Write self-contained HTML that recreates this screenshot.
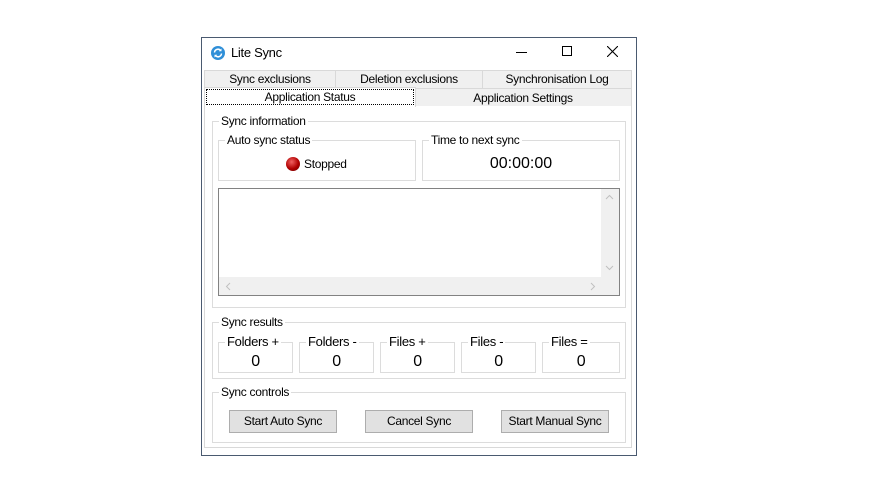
<!DOCTYPE html>
<html><head><style>
body{margin:0;width:890px;height:500px;background:#fff;position:relative;font-family:"Liberation Sans",sans-serif;font-size:12px;letter-spacing:-0.3px;color:#000;overflow:hidden}
.a{position:absolute;box-sizing:border-box}
.tab{position:absolute;box-sizing:border-box;background:#f0f0f0;border:1px solid #d9d9d9;text-align:center;line-height:17px;font-size:12px}
.gb{position:absolute;box-sizing:border-box;border:1px solid #dcdcdc}
.lg{position:absolute;background:#fff;padding:0 2px;top:-8px;left:6px;line-height:14px;white-space:nowrap}
.btn{position:absolute;box-sizing:border-box;background:#e1e1e1;border:1px solid #adadad;text-align:center;line-height:20px;top:410px;height:23px;width:108px}
.num{position:absolute;left:0;right:0;top:10px;text-align:center;font-size:16px}
</style></head><body>
<div class="a" style="left:201px;top:37px;width:436px;height:419px;border:1px solid #4a5a70;background:#fff"></div>
<svg class="a" style="left:210px;top:45px" width="16" height="16" viewBox="0 0 16 16"><circle cx="8" cy="8" r="7" fill="#2f8fd8"/><path d="M4.5 7.5a3.5 3.5 0 0 1 6.2-2M11.5 8.5a3.5 3.5 0 0 1-6.2 2" stroke="#fff" stroke-width="1.5" fill="none"/><path d="M11.5 3.5v2.7h-2.7z M4.5 12.5v-2.7h2.7z" fill="#fff"/></svg>
<div class="a" style="left:231px;top:45px;font-size:13px">Lite Sync</div>
<div class="a" style="left:516px;top:52px;width:11px;height:1px;background:#000"></div>
<div class="a" style="left:562px;top:46px;width:10px;height:10px;border:1px solid #000"></div>
<svg class="a" style="left:607px;top:46px" width="11" height="11"><path d="M0 0L11 11M11 0L0 11" stroke="#000" stroke-width="1.1"/></svg>

<div class="tab" style="left:204px;top:70px;width:132px;height:19px">Sync exclusions</div>
<div class="tab" style="left:335px;top:70px;width:148px;height:19px">Deletion exclusions</div>
<div class="tab" style="left:482px;top:70px;width:150px;height:19px">Synchronisation Log</div>
<div class="tab" style="left:414px;top:88px;width:218px;height:19px;line-height:19px">Application Settings</div>
<div class="a" style="left:204px;top:106px;width:428px;height:342px;border:1px solid #d9d9d9;border-top:none;background:#fff"></div>
<div class="a" style="left:204px;top:87px;width:212px;height:20px;background:#fff;border:1px solid #d9d9d9;border-bottom:none"></div>
<div class="a" style="left:206px;top:89px;width:208px;height:16px;border:1px dotted #000;text-align:center;line-height:14px">Application Status</div>

<div class="gb" style="left:212px;top:121px;width:414px;height:187px"><span class="lg">Sync information</span></div>
<div class="gb" style="left:218px;top:140px;width:198px;height:41px"><span class="lg">Auto sync status</span></div>
<div class="a" style="left:286px;top:157px;width:14px;height:14px;border-radius:50%;background:radial-gradient(circle at 40% 35%,#f06060,#b00000 55%,#600000)"></div>
<div class="a" style="left:304px;top:157px">Stopped</div>
<div class="gb" style="left:422px;top:140px;width:198px;height:41px"><span class="lg">Time to next sync</span></div>
<div class="a" style="left:422px;top:155px;width:198px;text-align:center;font-size:16px;letter-spacing:0">00:00:00</div>

<div class="a" style="left:218px;top:188px;width:402px;height:108px;border:1px solid #828282;background:#fff"></div>
<div class="a" style="left:601px;top:189px;width:18px;height:89px;background:#f0f0f0"></div>
<div class="a" style="left:219px;top:277px;width:400px;height:18px;background:#f0f0f0"></div>
<svg class="a" style="left:605px;top:194px" width="9" height="6"><path d="M1 5L4.5 1.5L8 5" stroke="#c0c0c0" fill="none"/></svg>
<svg class="a" style="left:605px;top:265px" width="9" height="6"><path d="M1 1L4.5 4.5L8 1" stroke="#c0c0c0" fill="none"/></svg>
<svg class="a" style="left:225px;top:282px" width="6" height="9"><path d="M5 1L1.5 4.5L5 8" stroke="#c0c0c0" fill="none"/></svg>
<svg class="a" style="left:590px;top:282px" width="6" height="9"><path d="M1 1L4.5 4.5L1 8" stroke="#c0c0c0" fill="none"/></svg>

<div class="gb" style="left:212px;top:322px;width:414px;height:57px"><span class="lg">Sync results</span></div>
<div class="gb" style="left:218px;top:342px;width:75px;height:31px"><span class="lg" style="font-size:13px">Folders +</span><div class="num">0</div></div>
<div class="gb" style="left:299px;top:342px;width:75px;height:31px"><span class="lg" style="font-size:13px">Folders -</span><div class="num">0</div></div>
<div class="gb" style="left:380px;top:342px;width:75px;height:31px"><span class="lg" style="font-size:13px">Files +</span><div class="num">0</div></div>
<div class="gb" style="left:461px;top:342px;width:75px;height:31px"><span class="lg" style="font-size:13px">Files -</span><div class="num">0</div></div>
<div class="gb" style="left:542px;top:342px;width:78px;height:31px"><span class="lg" style="font-size:13px">Files =</span><div class="num">0</div></div>

<div class="gb" style="left:212px;top:392px;width:414px;height:51px"><span class="lg">Sync controls</span></div>
<div class="btn" style="left:229px">Start Auto Sync</div>
<div class="btn" style="left:365px">Cancel Sync</div>
<div class="btn" style="left:501px">Start Manual Sync</div>
</body></html>
